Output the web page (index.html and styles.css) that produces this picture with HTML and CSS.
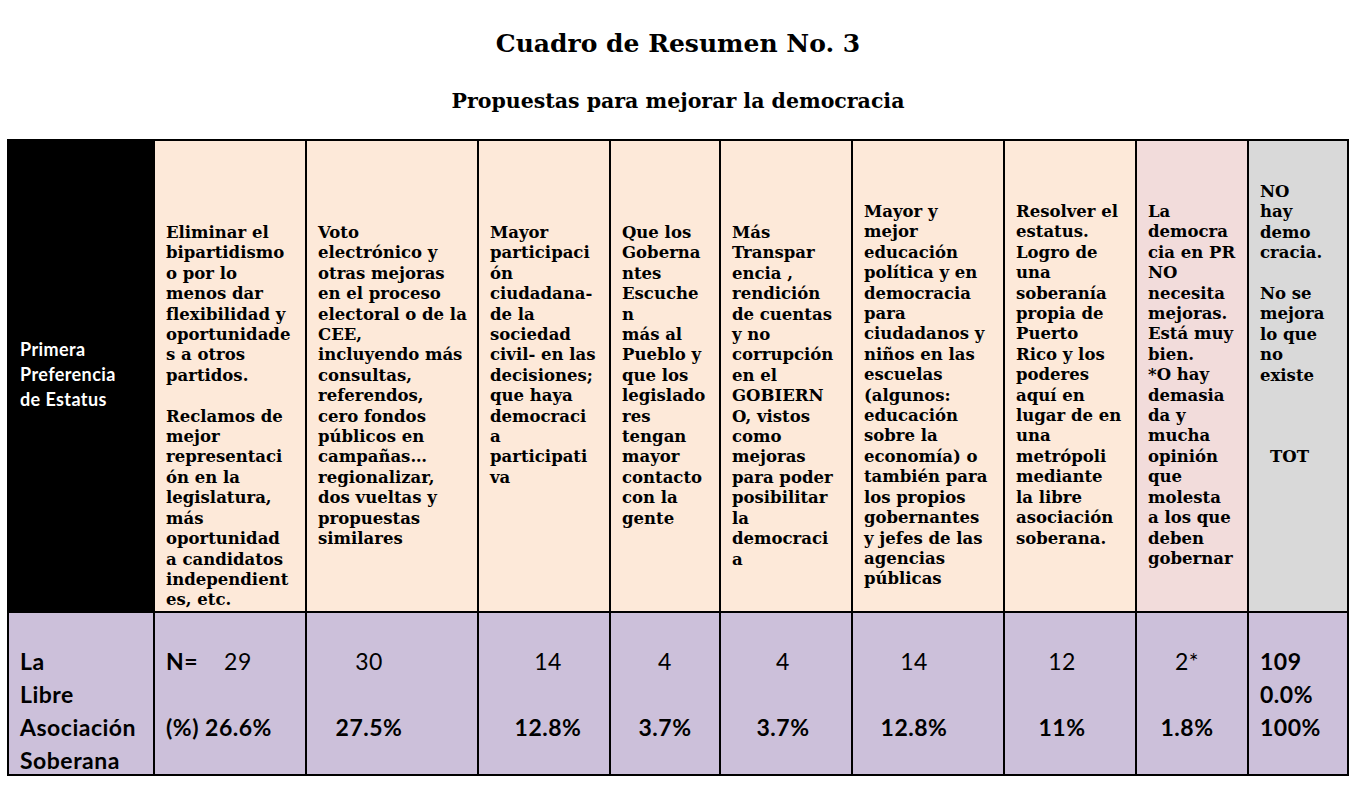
FILE: index.html
```html
<!DOCTYPE html>
<html lang="es">
<head>
<meta charset="utf-8">
<title>Cuadro de Resumen No. 3</title>
<link rel="stylesheet" href="styles.css">
</head>
<body>
<div class="page">
  <h1 class="title">Cuadro de Resumen No. 3</h1>
  <h2 class="subtitle">Propuestas para mejorar la democracia</h2>

  <div class="table">
    <div class="cell head-black"><div class="status-label">Primera<br>Preferencia<br>de Estatus</div></div>

    <div class="cell head peach top-1">Eliminar el<br>bipartidismo<br>o por lo<br>menos dar<br>flexibilidad y<br>oportunidade<br>s a otros<br>partidos.<br><br>Reclamos de<br>mejor<br>representaci<br>ón en la<br>legislatura,<br>más<br>oportunidad<br>a candidatos<br>independient<br>es, etc.</div>

    <div class="cell head peach top-1">Voto<br>electrónico y<br>otras mejoras<br>en el proceso<br>electoral o de la<br>CEE,<br>incluyendo más<br>consultas,<br>referendos,<br>cero fondos<br>públicos en<br>campañas…<br>regionalizar,<br>dos vueltas y<br>propuestas<br>similares</div>

    <div class="cell head peach top-1">Mayor<br>participaci<br>ón<br>ciudadana-<br>de la<br>sociedad<br>civil- en las<br>decisiones;<br>que haya<br>democraci<br>a<br>participati<br>va</div>

    <div class="cell head peach top-1">Que los<br>Goberna<br>ntes<br>Escuche<br>n<br>más al<br>Pueblo y<br>que los<br>legislado<br>res<br>tengan<br>mayor<br>contacto<br>con la<br>gente</div>

    <div class="cell head peach top-1">Más<br>Transpar<br>encia ,<br>rendición<br>de cuentas<br>y no<br>corrupción<br>en el<br>GOBIERN<br>O, vistos<br>como<br>mejoras<br>para poder<br>posibilitar<br>la<br>democraci<br>a</div>

    <div class="cell head peach top-2">Mayor y<br>mejor<br>educación<br>política y en<br>democracia<br>para<br>ciudadanos y<br>niños en las<br>escuelas<br>(algunos:<br>educación<br>sobre la<br>economía) o<br>también para<br>los propios<br>gobernantes<br>y jefes de las<br>agencias<br>públicas</div>

    <div class="cell head peach top-2">Resolver el<br>estatus.<br>Logro de<br>una<br>soberanía<br>propia de<br>Puerto<br>Rico y los<br>poderes<br>aquí en<br>lugar de en<br>una<br>metrópoli<br>mediante<br>la libre<br>asociación<br>soberana.</div>

    <div class="cell head pink top-2">La<br>democra<br>cia en PR<br>NO<br>necesita<br>mejoras.<br>Está muy<br>bien.<br>*O hay<br>demasia<br>da y<br>mucha<br>opinión<br>que<br>molesta<br>a los que<br>deben<br>gobernar</div>

    <div class="cell head gray top-3">NO<br>hay<br>demo<br>cracia.<br><br>No se<br>mejora<br>lo que<br>no<br>existe<br><br><br><br><span class="tot">TOT</span></div>

    <div class="cell body body-label">La<br>Libre<br>Asociación<br>Soberana</div>
    <div class="cell body n-left"><b>N=</b><span class="n-gap">29</span><br><br><b>(%) 26.6%</b></div>
    <div class="cell body num n-c2">30<br><br><b>27.5%</b></div>
    <div class="cell body num n-c3">14<br><br><b>12.8%</b></div>
    <div class="cell body num n-c4">4<br><br><b>3.7%</b></div>
    <div class="cell body num n-c5">4<br><br><b>3.7%</b></div>
    <div class="cell body num n-c6">14<br><br><b>12.8%</b></div>
    <div class="cell body num n-c7">12<br><br><b>11%</b></div>
    <div class="cell body num n-c8">2*<br><br><b>1.8%</b></div>
    <div class="cell body n-left"><b>109<br>0.0%<br>100%</b></div>
  </div>
</div>
</body>
</html>
```
FILE: styles.css
```css
html, body {
  margin: 0;
  padding: 0;
  background: #ffffff;
}

.page {
  width: 1356px;
  padding: 0 0 0 7px;
  box-sizing: border-box;
  color: #000;
}

.title {
  margin: 0;
  padding-top: 29px;
  text-align: center;
  font-family: "DejaVu Serif", "Liberation Serif", serif;
  font-weight: bold;
  font-size: 25px;
  line-height: 30px;
  letter-spacing: 0;
  width: 1342px;
}

.subtitle {
  margin: 29px 0 0 0;
  text-align: center;
  font-family: "DejaVu Serif", "Liberation Serif", serif;
  font-weight: bold;
  font-size: 20.5px;
  line-height: 26px;
  letter-spacing: 0;
  width: 1342px;
}

.table {
  margin-top: 25px;
  display: grid;
  grid-template-columns: 144px 150px 170px 130px 108px 130px 150px 130px 110px 98px;
  grid-template-rows: 470px 161px;
  gap: 2px;
  padding: 2px;
  background: #000;
  width: max-content;
}

.cell {
  box-sizing: border-box;
  padding-left: 11px;
  white-space: nowrap;
  overflow: hidden;
}

.head {
  font-family: "DejaVu Serif", "Liberation Serif", serif;
  font-weight: bold;
  font-size: 16.5px;
  line-height: 20.4px;
  letter-spacing: 0;
}

.peach { background: #fde9d9; }
.pink  { background: #f2dcdb; }
.gray  { background: #d9d9d9; }

.top-1 { padding-top: 82px; }
.top-2 { padding-top: 61px; }
.top-3 { padding-top: 41px; }

.tot { padding-left: 10px; }

.head-black {
  background: #000;
  color: #fff;
  font-family: Lato, "Open Sans", sans-serif;
  font-weight: bold;
  font-size: 18px;
  line-height: 25px;
  letter-spacing: 0.4px;
  padding-top: 196px;
}

.body {
  background: #ccc0da;
  font-family: Lato, "Open Sans", sans-serif;
  font-size: 23px;
  line-height: 33px;
  letter-spacing: 0.5px;
  padding-top: 32px;
}

.body-label { font-weight: bold; }

.n-left { text-align: left; }
.n-gap { margin-left: 26px; }

.num { text-align: center; padding-left: 0; }
.n-c2 { padding-right: 46px; }
.n-c3 { padding-left: 8px; }
.n-c4 { padding-right: 0; }
.n-c5 { padding-right: 6px; }
.n-c6 { padding-right: 28px; }
.n-c7 { padding-right: 16px; }
.n-c8 { padding-right: 10px; }
```
